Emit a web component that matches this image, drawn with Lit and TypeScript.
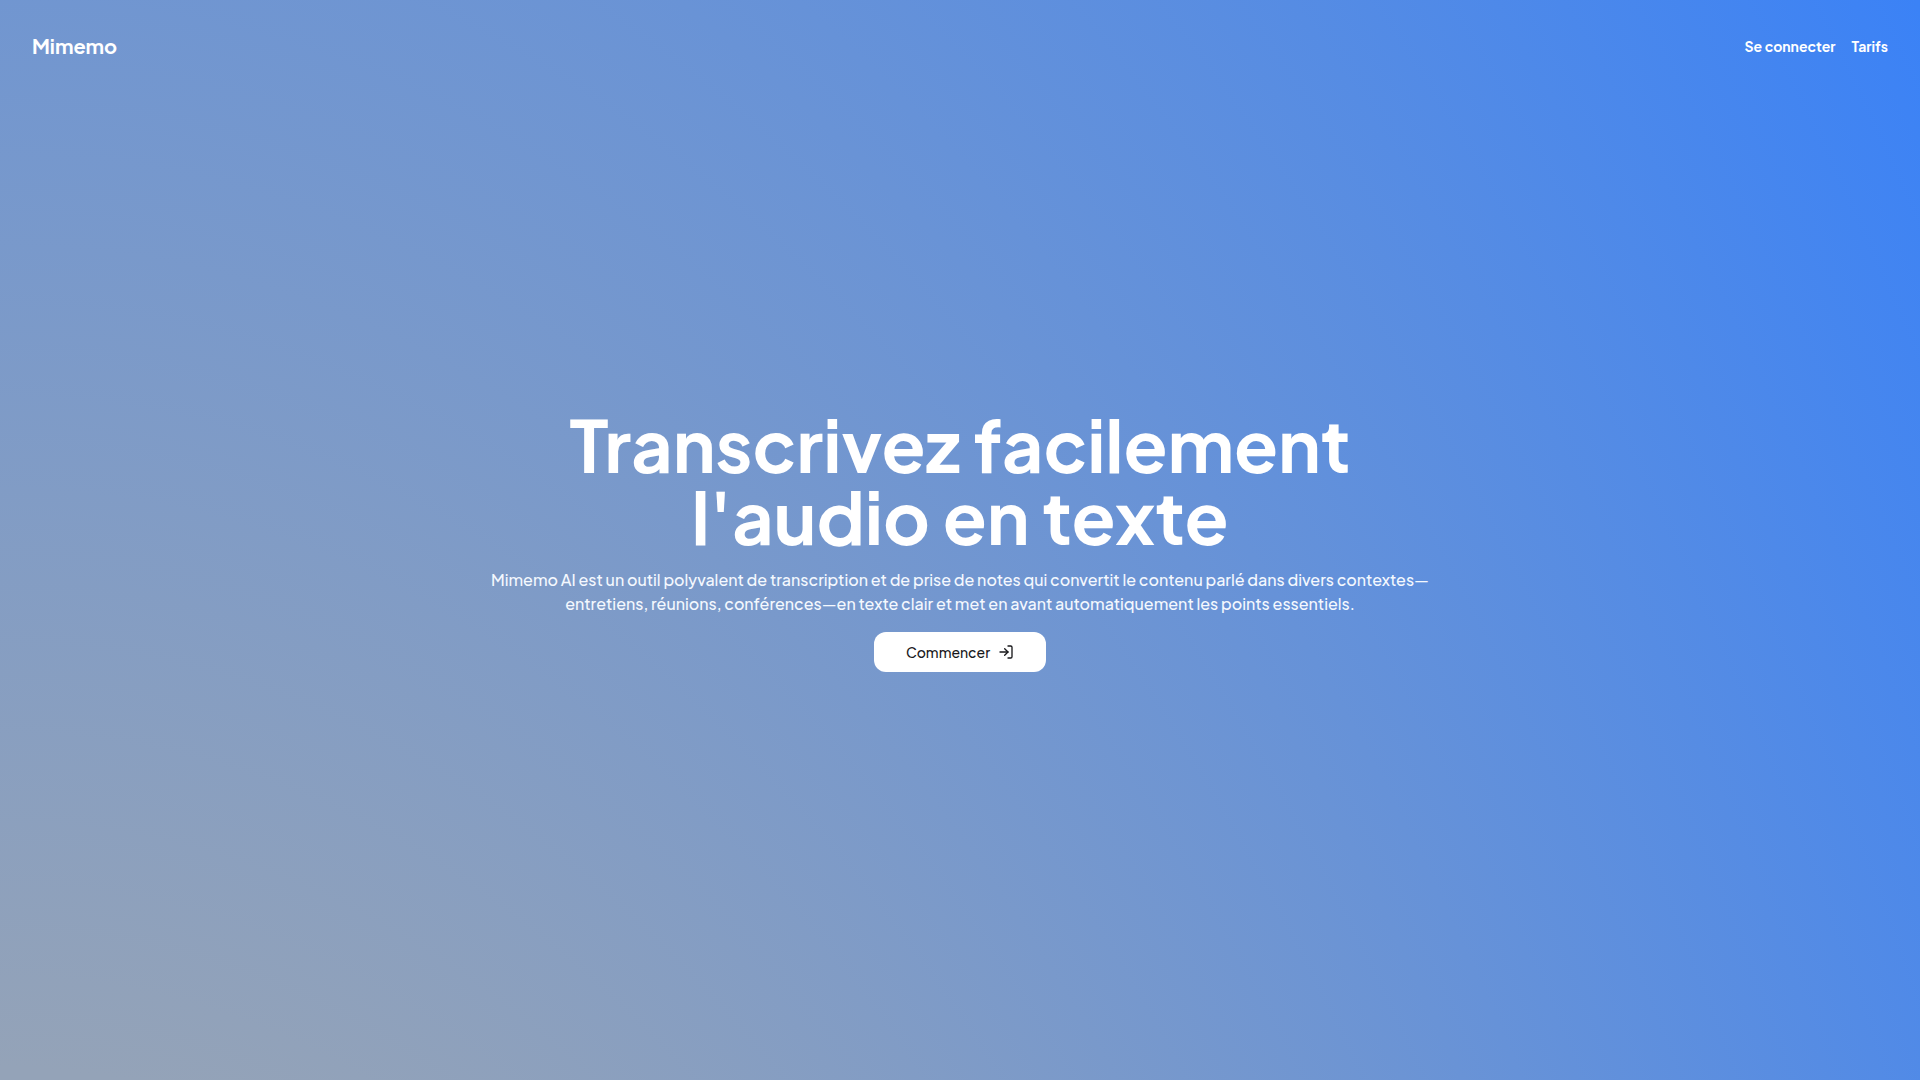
import { LitElement, html, css } from "lit";
import { customElement } from "lit/decorators.js";

@customElement("app-root")
export class AppRoot extends LitElement {
  static styles = css`
    :host {
      display: flex;
      flex-direction: column;
      box-sizing: border-box;
      min-height: 100vh;
      color: #fff;
      font-family: "Plus Jakarta Sans", Inter, "Liberation Sans", sans-serif;
      font-size: 16px;
      line-height: 24px;
      background: radial-gradient(138% 492% at 0 340%, #94a3b8 49%, #3b82f6 100%);
    }
    .bar {
      display: flex;
      align-items: center;
      justify-content: space-between;
      padding: 32px;
    }
    a {
      color: inherit;
      text-decoration: none;
    }
    .brand {
      font-size: 20px;
      line-height: 28px;
      font-weight: 700;
    }
    .links {
      display: flex;
      gap: 16px;
      font-size: 14px;
      font-weight: 700;
    }
    .hero {
      flex: 1;
      display: flex;
      flex-direction: column;
      align-items: center;
      justify-content: center;
      gap: 16px;
      padding: 0 32px 92px;
      text-align: center;
    }
    h1 {
      margin: 0;
      max-width: 896px;
      font-size: 72px;
      line-height: 72px;
      font-weight: 700;
    }
    p {
      margin: 0;
      max-width: 960px;
      font-weight: 500;
      color: #f4f8fe;
    }
    .start {
      display: flex;
      align-items: center;
      gap: 8px;
      height: 40px;
      padding: 0 32px;
      border: 0;
      border-radius: 12px;
      background: #fff;
      color: #18181b;
      font-family: inherit;
      font-size: 14px;
      font-weight: 500;
      cursor: pointer;
    }
    .icon {
      width: 16px;
      height: 16px;
      fill: none;
      stroke: currentColor;
      stroke-width: 2;
      stroke-linecap: round;
      stroke-linejoin: round;
    }
  `;

  render() {
    return html`
      <header class="bar">
        <a class="brand" href="#">Mimemo</a>
        <nav class="links">
          <a href="#connexion">Se connecter</a>
          <a href="#tarifs">Tarifs</a>
        </nav>
      </header>
      <main class="hero">
        <h1>Transcrivez facilement l'audio en texte</h1>
        <p>
          Mimemo AI est un outil polyvalent de transcription et de prise de notes qui convertit le contenu parlé dans divers contextes—entretiens, réunions, conférences—en texte clair et met en avant automatiquement les points essentiels.
        </p>
        <button class="start" type="button">
          Commencer
          <svg class="icon" viewBox="0 0 24 24" aria-hidden="true">
            <path d="M15 3h4a2 2 0 0 1 2 2v14a2 2 0 0 1-2 2h-4" />
            <path d="M10 17l5-5-5-5" />
            <path d="M15 12H3" />
          </svg>
        </button>
      </main>
    `;
  }
}
